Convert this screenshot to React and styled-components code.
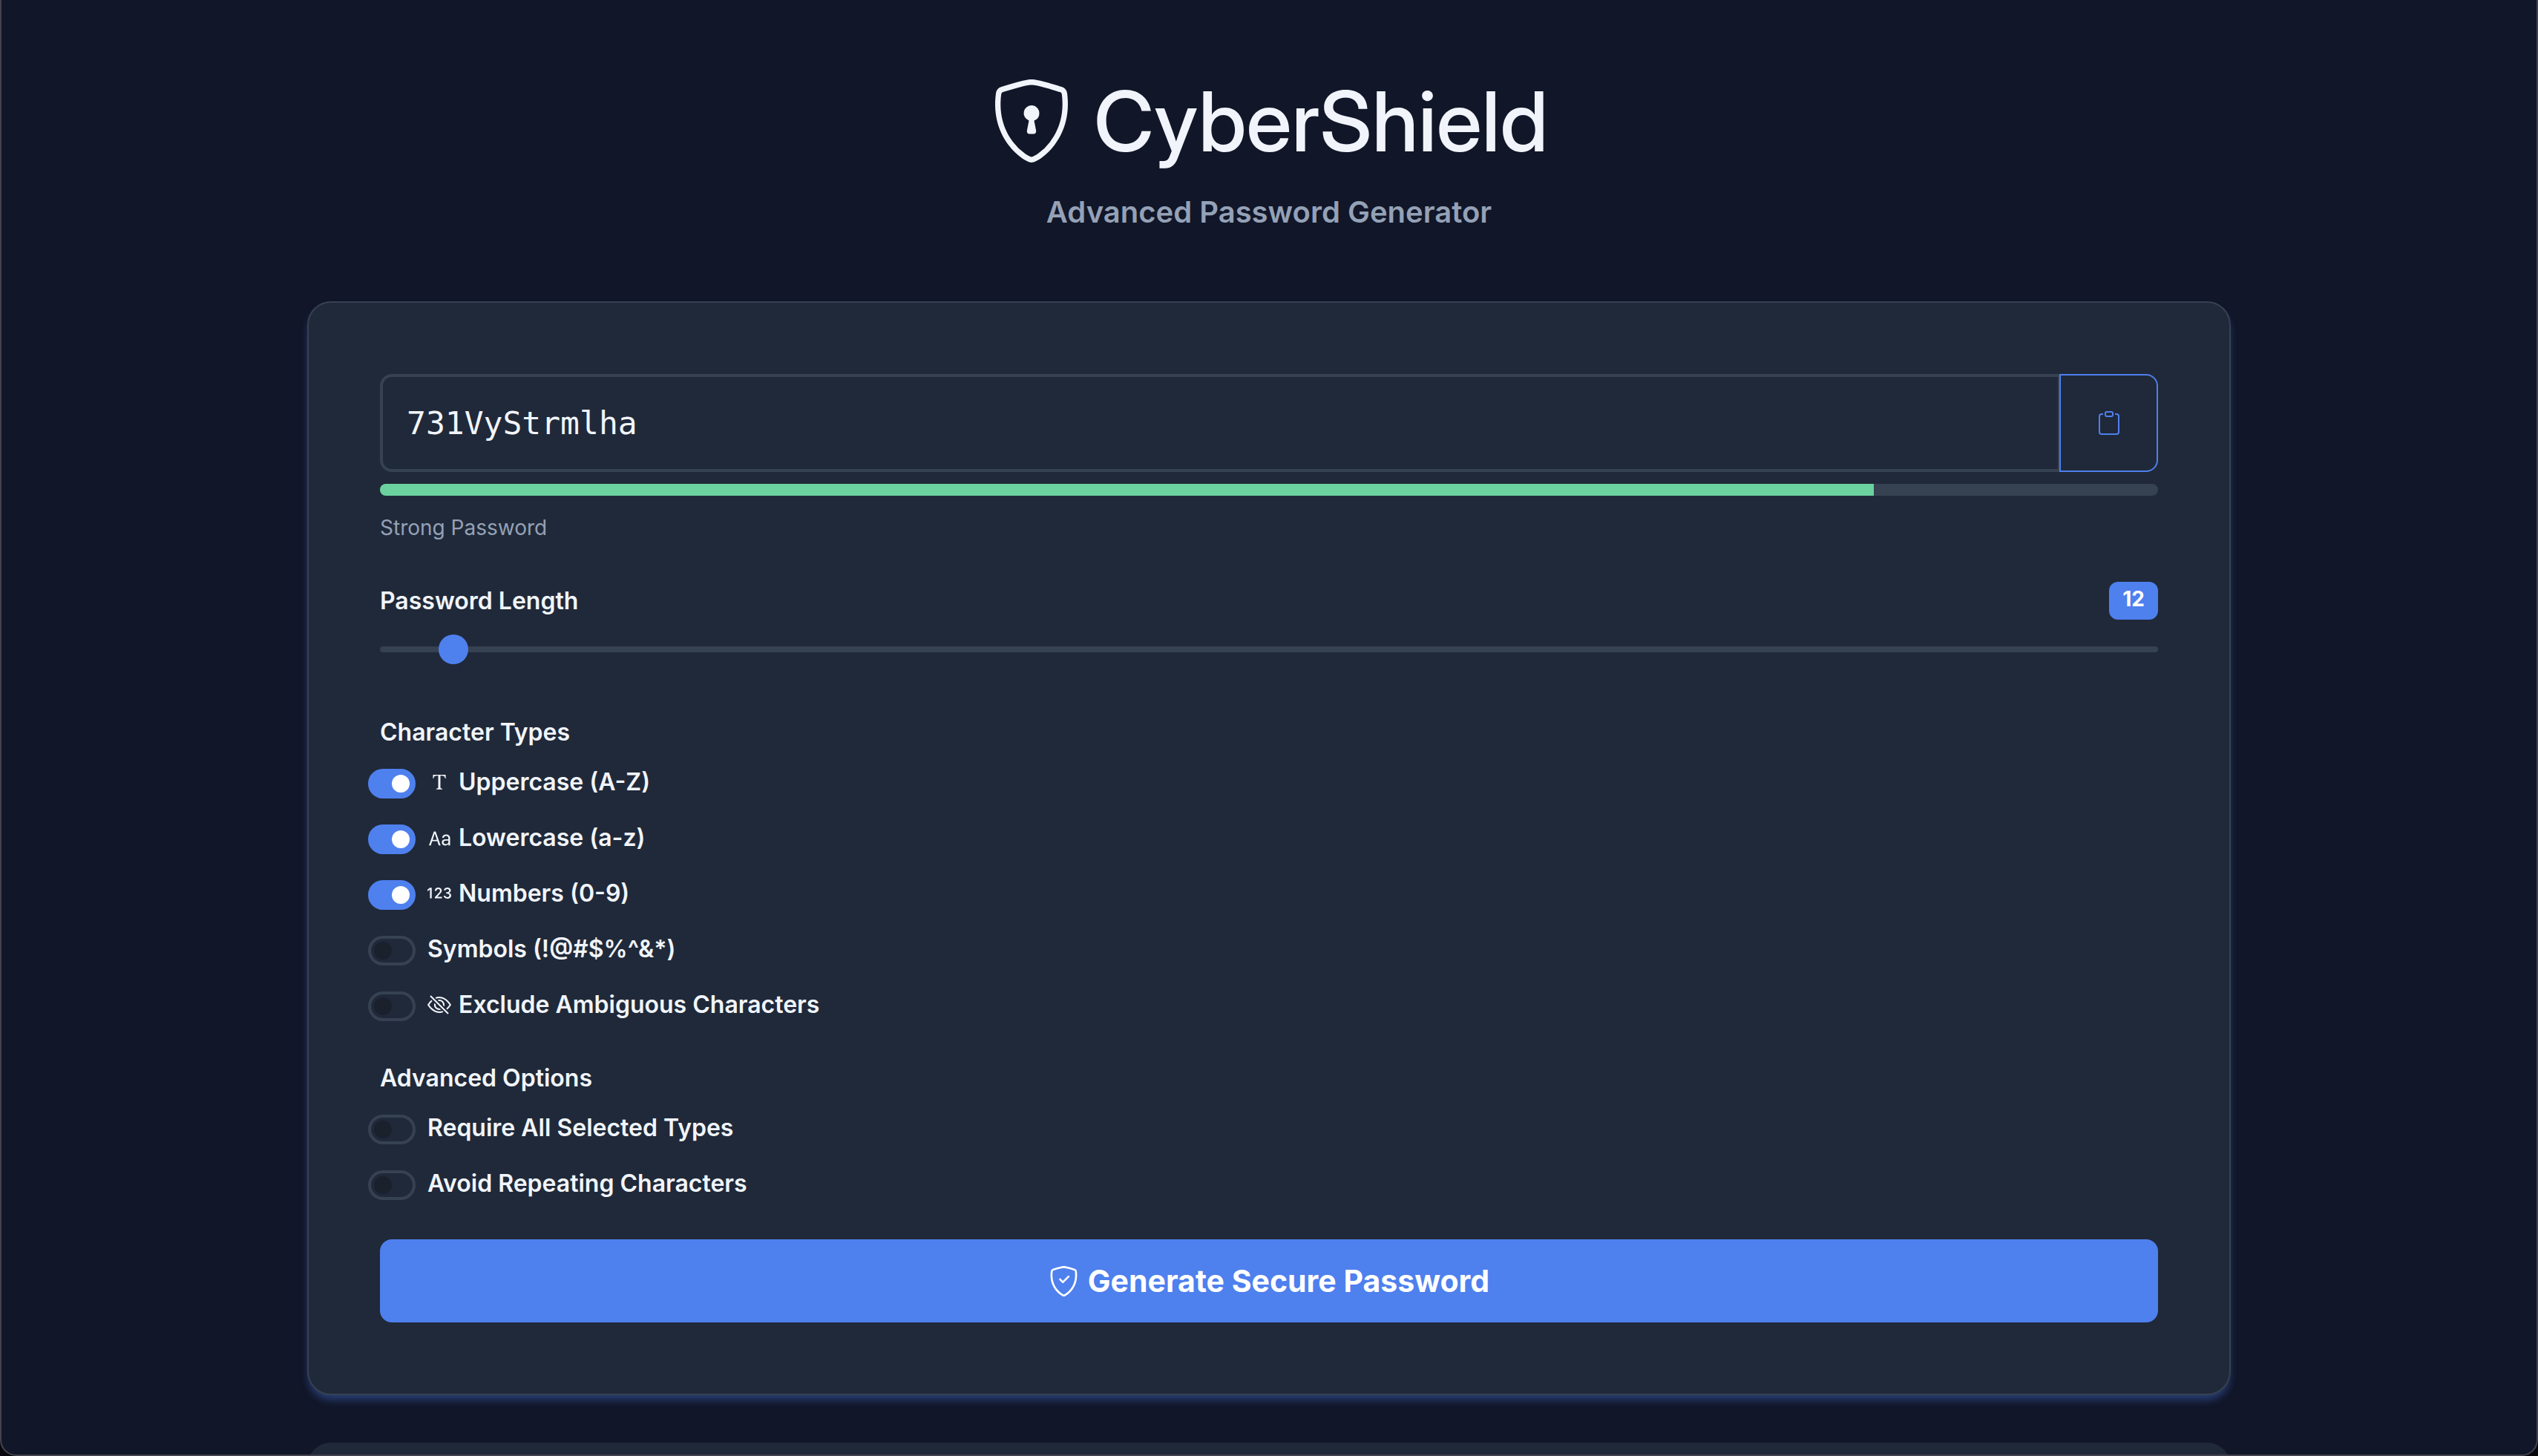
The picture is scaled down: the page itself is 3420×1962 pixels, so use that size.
import React, { useState } from "react";
import styled, { createGlobalStyle } from "styled-components";
import {
  BsShieldLock,
  BsShieldCheck,
  BsClipboard,
  BsFonts,
  BsType,
  Bs123,
  BsEyeSlash,
} from "react-icons/bs";

const color = {
  page: "#111628",
  card: "#202939",
  line: "#364152",
  text: "#f1f5fb",
  muted: "#94a1b6",
  accent: "#4e80ee",
  strong: "#6bd29f",
};

const GlobalStyle = createGlobalStyle`
  *, *::before, *::after { box-sizing: border-box; }
  html { background: #08080c; }
  body {
    margin: 0;
    font-family: Inter, "Liberation Sans", sans-serif;
    font-size: 32px;
    line-height: 48px;
    color: ${color.text};
  }
`;

const Frame = styled.div`
  height: 100vh;
  overflow: hidden;
  background: ${color.page};
  border: 2px solid #43434f;
  border-top: 0;
  border-radius: 0 0 22px 22px;
`;

const Container = styled.main`
  max-width: 2640px;
  margin: 0 auto;
  padding: 96px 24px 0;
`;

const Header = styled.header`
  display: flex;
  flex-direction: column;
  align-items: center;
  gap: 32px;
  margin-bottom: 96px;
`;

const Title = styled.h1`
  display: flex;
  align-items: center;
  gap: 28px;
  margin: 0;
  font-family: "Inter Display", Inter, "Liberation Sans", sans-serif;
  font-size: 112px;
  line-height: 134px;
  font-weight: 500;
`;

const Subtitle = styled.p`
  margin: 0;
  font-size: 40px;
  line-height: 48px;
  font-weight: 600;
  color: ${color.muted};
`;

const Card = styled.section`
  padding: 96px;
  margin-bottom: 64px;
  background: ${color.card};
  border: 2px solid ${({ $raised }) => ($raised ? color.line : color.card)};
  border-radius: 32px;
  box-shadow: ${({ $raised }) =>
    $raised ? "0 8px 12px -2px rgba(78, 128, 238, 0.4)" : "none"};
`;

const PasswordRow = styled.div`
  display: flex;
  height: 132px;
`;

const PasswordInput = styled.input`
  flex: 1;
  min-width: 0;
  padding: 0 32px;
  background: transparent;
  border: 4px solid ${color.line};
  border-right-width: 2px;
  border-radius: 16px 0 0 16px;
  color: ${color.text};
  font-family: "DejaVu Sans Mono", monospace;
  font-size: 43px;
  outline: none;
`;

const CopyButton = styled.button`
  display: flex;
  align-items: center;
  justify-content: center;
  width: 133px;
  padding: 0;
  background: transparent;
  border: 2px solid ${color.accent};
  border-radius: 0 16px 16px 0;
  color: ${color.accent};
  font-size: 32px;
`;

const Meter = styled.div`
  height: 16px;
  margin-top: 16px;
  overflow: hidden;
  background: ${color.line};
  border-radius: 8px;
`;

const MeterFill = styled.div`
  height: 100%;
  background: ${color.strong};
`;

const Strength = styled.p`
  margin: 19px 0 49px;
  font-size: 28px;
  line-height: 48px;
  color: ${color.muted};
`;

const LengthRow = styled.div`
  display: flex;
  align-items: center;
  justify-content: space-between;
`;

const LengthLabel = styled.label`
  font-weight: 600;
`;

const Badge = styled.output`
  padding: 9px 18px 14px;
  background: ${color.accent};
  border-radius: 12px;
  color: #fff;
  font-size: 28px;
  line-height: 28px;
  font-weight: 700;
`;

const Slider = styled.input`
  appearance: none;
  display: block;
  width: 100%;
  height: 48px;
  margin: 16px 0 64px;
  background: transparent;

  &::-webkit-slider-runnable-track {
    height: 8px;
    background: ${color.line};
    border-radius: 4px;
  }
  &::-webkit-slider-thumb {
    appearance: none;
    width: 40px;
    height: 40px;
    margin-top: -16px;
    background: ${color.accent};
    border: 0;
    border-radius: 50%;
  }
`;

const OptionGroup = styled.fieldset`
  display: flex;
  flex-direction: column;
  gap: 27px;
  min-width: 0;
  margin: 0 0 51px;
  padding: 0;
  border: 0;
`;

const GroupTitle = styled.legend`
  padding: 0;
  margin-bottom: 19px;
  font-weight: 600;
`;

const OptionLabel = styled.label`
  display: flex;
  align-items: center;
  gap: 16px;
  margin-left: -16px;
  font-weight: 600;
`;

const OptionText = styled.span`
  display: flex;
  align-items: center;
  gap: 10px;
`;

const Switch = styled.input`
  appearance: none;
  display: flex;
  align-items: center;
  width: 64px;
  height: 40px;
  margin: 4px 0 0;
  padding: 0 4px;
  background: transparent;
  border: 4px solid ${color.line};
  border-radius: 20px;

  &::before {
    content: "";
    width: 24px;
    height: 24px;
    border-radius: 50%;
    background: #1a202c;
  }
  &:checked {
    justify-content: flex-end;
    background: ${color.accent};
    border-color: ${color.accent};
  }
  &:checked::before {
    background: #fff;
  }
`;

const GenerateButton = styled.button`
  display: flex;
  align-items: center;
  justify-content: center;
  gap: 12px;
  width: 100%;
  height: 112px;
  padding: 0;
  background: ${color.accent};
  border: 0;
  border-radius: 16px;
  color: #fff;
  font-family: inherit;
  font-size: 41px;
  line-height: 60px;
  font-weight: 700;
`;

const TYPES = [
  { id: "upper", label: "Uppercase (A-Z)", Icon: BsFonts, on: true },
  { id: "lower", label: "Lowercase (a-z)", Icon: BsType, on: true },
  { id: "numbers", label: "Numbers (0-9)", Icon: Bs123, on: true },
  { id: "symbols", label: "Symbols (!@#$%^&*)" },
  { id: "ambiguous", label: "Exclude Ambiguous Characters", Icon: BsEyeSlash },
];

const ADVANCED = [
  { id: "requireAll", label: "Require All Selected Types" },
  { id: "noRepeat", label: "Avoid Repeating Characters" },
];

function Options({ title, items }) {
  return (
    <OptionGroup>
      <GroupTitle>{title}</GroupTitle>
      {items.map(({ id, label, Icon, on }) => (
        <OptionLabel key={id} htmlFor={id}>
          <Switch type="checkbox" id={id} defaultChecked={on} />
          <OptionText>
            {Icon && <Icon aria-hidden="true" />}
            {label}
          </OptionText>
        </OptionLabel>
      ))}
    </OptionGroup>
  );
}

export default function App() {
  const [length, setLength] = useState(12);
  const strength = 84;

  return (
    <>
      <GlobalStyle />
      <Frame>
        <Container>
          <Header>
            <Title>
              <BsShieldLock aria-hidden="true" />
              CyberShield
            </Title>
            <Subtitle>Advanced Password Generator</Subtitle>
          </Header>
          <Card $raised>
            <PasswordRow>
              <PasswordInput aria-label="Generated password" readOnly value="731VyStrmlha" />
              <CopyButton type="button" aria-label="Copy password">
                <BsClipboard aria-hidden="true" />
              </CopyButton>
            </PasswordRow>
            <Meter>
              <MeterFill style={{ width: `${strength}%` }} />
            </Meter>
            <Strength>Strong Password</Strength>
            <LengthRow>
              <LengthLabel htmlFor="length">Password Length</LengthLabel>
              <Badge htmlFor="length">{length}</Badge>
            </LengthRow>
            <Slider
              type="range"
              id="length"
              min="8"
              max="128"
              value={length}
              onChange={(e) => setLength(Number(e.target.value))}
            />
            <Options title="Character Types" items={TYPES} />
            <Options title="Advanced Options" items={ADVANCED} />
            <GenerateButton type="button">
              <BsShieldCheck aria-hidden="true" />
              Generate Secure Password
            </GenerateButton>
          </Card>
          <Card />
        </Container>
      </Frame>
    </>
  );
}
